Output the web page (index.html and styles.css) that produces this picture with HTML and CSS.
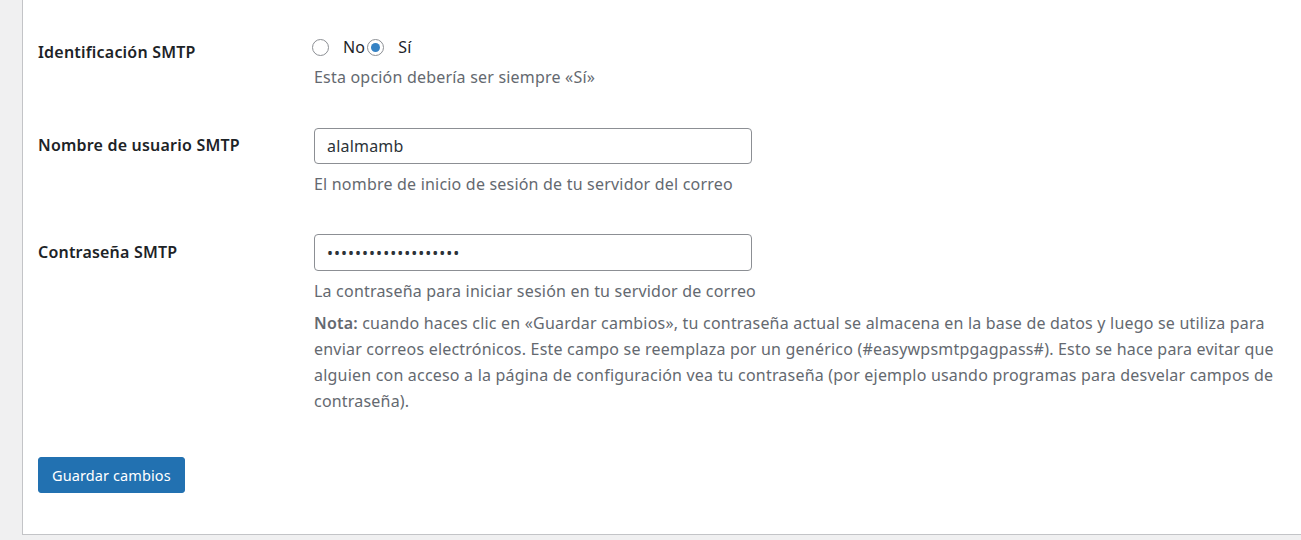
FILE: index.html
```html
<!DOCTYPE html>
<html lang="es">
<head>
<meta charset="utf-8">
<title>Ajustes SMTP</title>
<link rel="stylesheet" href="styles.css">
</head>
<body>
<div class="panel">
  <form class="form">
    <div class="row row-auth">
      <div class="label">Identificación SMTP</div>
      <div class="field">
        <div class="radios">
          <label class="radio radio-first"><input type="radio" name="auth" value="no"><span>No</span></label><label class="radio"><input type="radio" name="auth" value="si" checked><span>Sí</span></label>
        </div>
        <p class="desc">Esta opción debería ser siempre «Sí»</p>
      </div>
    </div>
    <div class="row row-user">
      <div class="label">Nombre de usuario SMTP</div>
      <div class="field">
        <input class="text" type="text" value="alalmamb">
        <p class="desc">El nombre de inicio de sesión de tu servidor del correo</p>
      </div>
    </div>
    <div class="row row-pass">
      <div class="label">Contraseña SMTP</div>
      <div class="field">
        <input class="text" type="password" value="xxxxxxxxxxxxxxxxxxx">
        <p class="desc">La contraseña para iniciar sesión en tu servidor de correo</p>
        <p class="desc note"><strong>Nota:</strong> cuando haces clic en «Guardar cambios», tu contraseña actual se almacena en la base de datos y luego se utiliza para enviar correos electrónicos. Este campo se reemplaza por un genérico (#easywpsmtpgagpass#). Esto se hace para evitar que alguien con acceso a la página de configuración vea tu contraseña (por ejemplo usando programas para desvelar campos de contraseña).</p>
      </div>
    </div>
    <div class="actions">
      <button type="button" class="button">Guardar cambios</button>
    </div>
  </form>
</div>
</body>
</html>
```
FILE: styles.css
```css
html, body {
  margin: 0;
  padding: 0;
  background: #f0f0f1;
  height: 540px;
  overflow: hidden;
}
body {
  font-family: "Noto Sans", "Liberation Sans", sans-serif;
  font-size: 16px;
  letter-spacing: 0.2px;
  color: #1d2327;
}
.panel {
  margin-left: 22px;
  width: 1300px;
  height: 535px;
  box-sizing: border-box;
  background: #fff;
  border-left: 1px solid #c3c4c7;
  border-bottom: 1px solid #c3c4c7;
  padding: 37px 0 0 15px;
}
.row {
  display: grid;
  grid-template-columns: 276px 960px;
  align-items: start;
}
.label {
  font-weight: 600;
  line-height: 20px;
  color: #1d2327;
}
.field p {
  margin: 0;
}
.desc {
  color: #646970;
  line-height: 20px;
}
.row-auth .label { padding-top: 5px; }
.row-auth .desc { margin-top: 10px; }
.radios {
  display: flex;
  height: 20px;
  align-items: center;
}
.radio {
  display: inline-flex;
  align-items: center;
  line-height: 20px;
}
.radio input {
  appearance: none;
  -webkit-appearance: none;
  width: 17px;
  height: 17px;
  margin: 0 14px 0 2px;
  border: 1px solid #8c8f94;
  border-radius: 50%;
  background: #fff;
  box-sizing: border-box;
  display: inline-grid;
  place-items: center;
}
.radio-first input {
  margin-left: -2px;
}
.radio input:checked::before {
  content: "";
  width: 9px;
  height: 9px;
  border-radius: 50%;
  background: #3582c4;
}
.row-user { margin-top: 41px; }
.row-user .label { padding-top: 7px; }
.row-pass { margin-top: 40px; }
.row-pass .label { padding-top: 8px; }
.text {
  display: block;
  width: 438px;
  height: 36px;
  box-sizing: border-box;
  border: 1px solid #8c8f94;
  border-radius: 4px;
  padding: 0 12px;
  font-family: inherit;
  font-size: 16px;
  letter-spacing: 0.2px;
  color: #2c3338;
  background: #fff;
  margin: 0;
}
.row-pass .text {
  height: 37px;
  letter-spacing: 1px;
}
.row-user .desc, .row-pass .desc { margin-top: 10px; }
.note {
  line-height: 26px;
  margin-top: 9px !important;
  width: 975px;
}
.note strong {
  font-weight: 600;
}
.actions {
  margin-top: 43px;
}
.button {
  height: 36px;
  padding: 0 13px;
  background: #2271b1;
  border: 1px solid #2271b1;
  border-radius: 3px;
  color: #fff;
  font-family: inherit;
  font-size: 14.5px;
  letter-spacing: 0.1px;
  cursor: pointer;
}
```
